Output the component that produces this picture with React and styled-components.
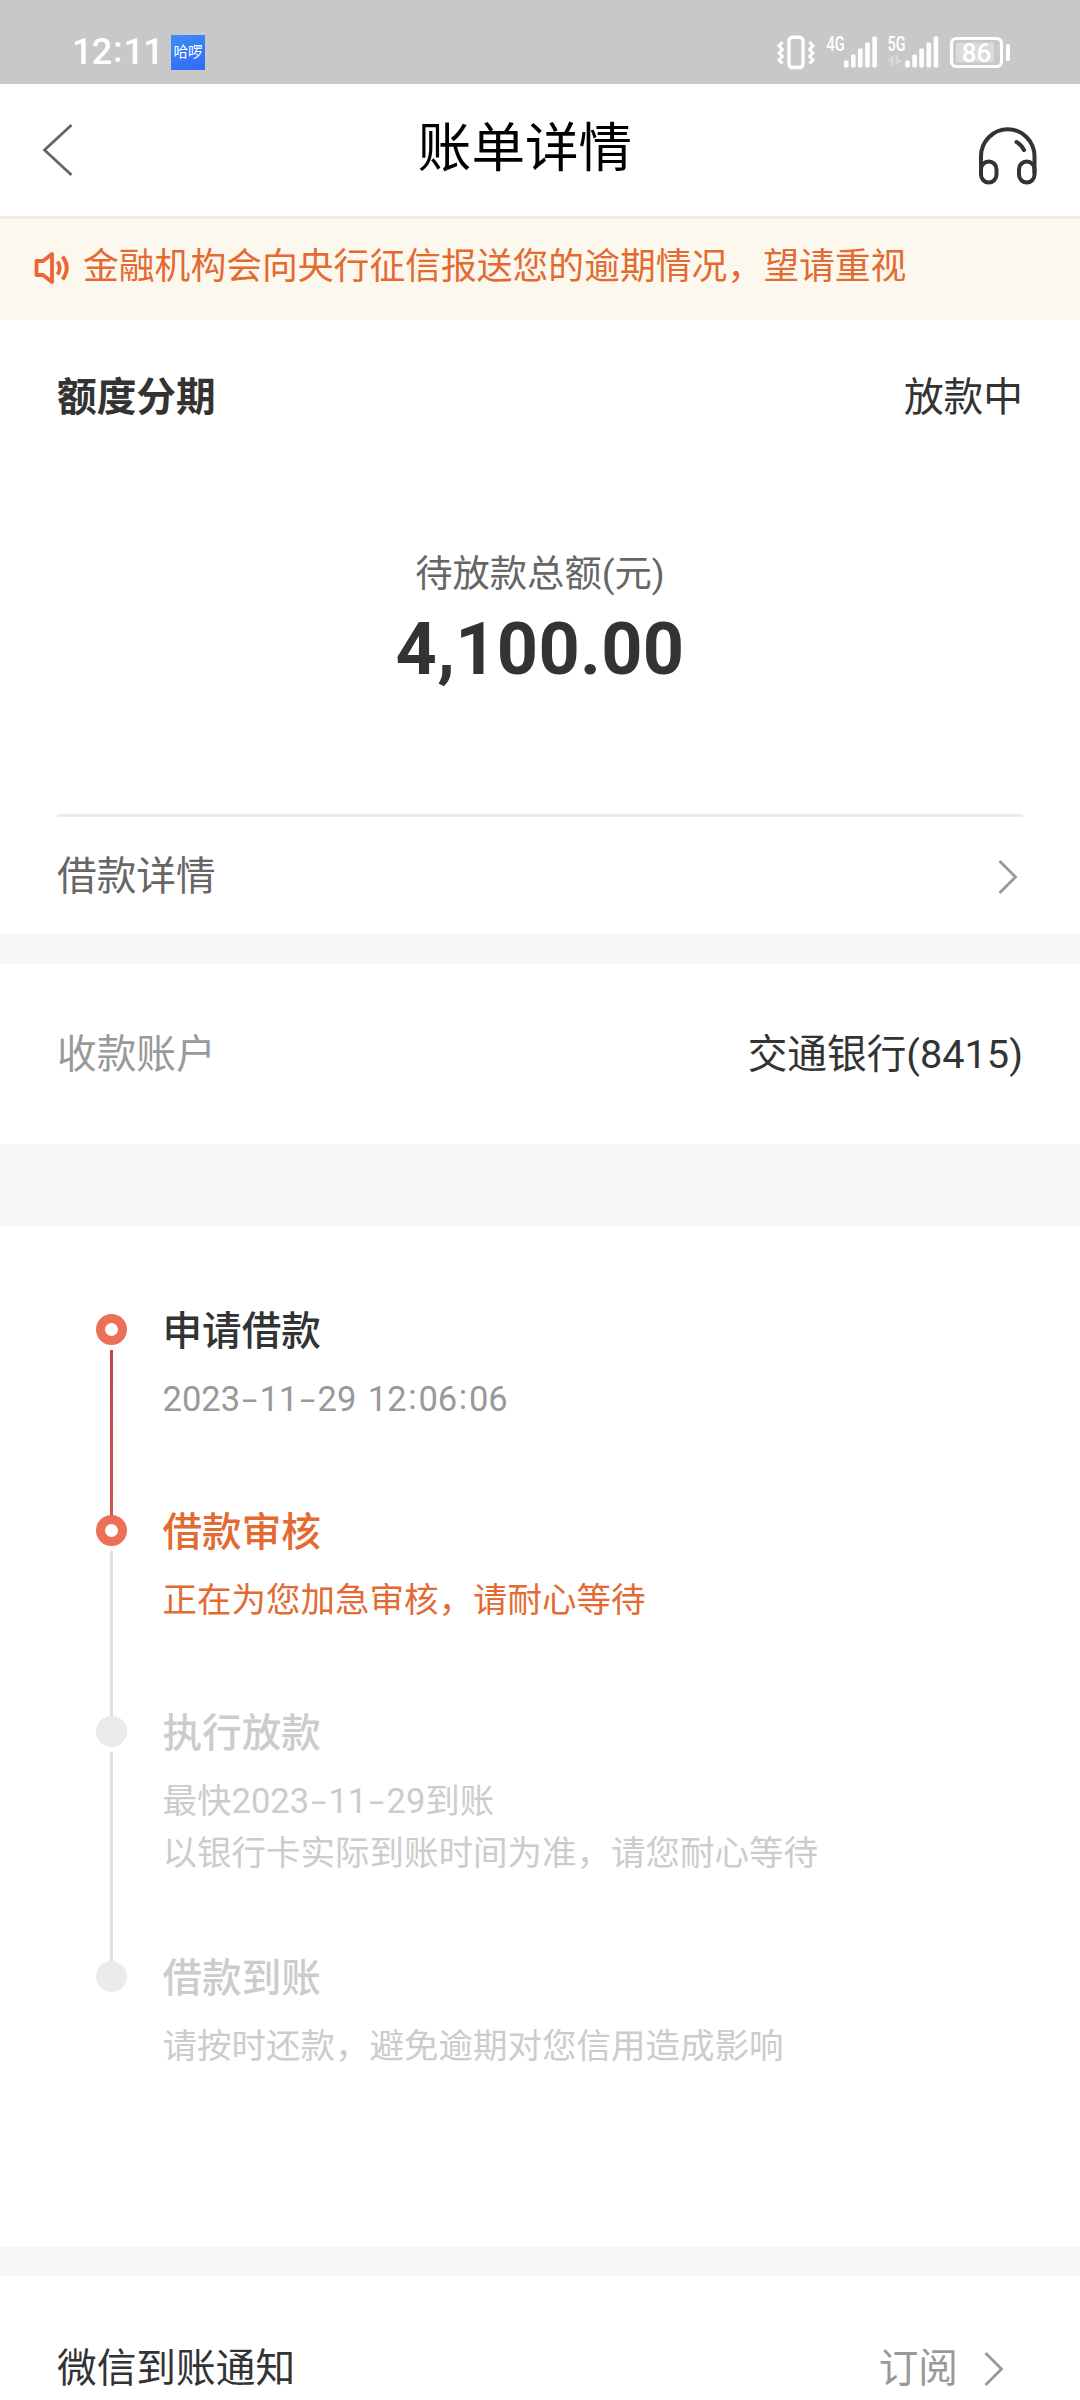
import React from 'react';
import styled, { createGlobalStyle } from 'styled-components';

const GlobalStyle = createGlobalStyle`
  * {
    box-sizing: border-box;
  }

  body {
    margin: 0;
    background: #ffffff;
    font-family: Roboto, 'Noto Sans CJK SC', sans-serif;
    color: #333333;
  }
`;

const Page = styled.div`
  display: flex;
  flex-direction: column;
  width: 1080px;
  height: 2400px;
  overflow: hidden;
  background: #ffffff;
`;

/* ---------- status bar ---------- */

const StatusBar = styled.div`
  flex: none;
  display: flex;
  align-items: flex-start;
  justify-content: space-between;
  height: 84px;
  padding: 27px 69px 0 72px;
  background: #c8c8c8;
  color: #ffffff;
`;

const StatusLeft = styled.div`
  display: flex;
  align-items: center;
  height: 34px;
  margin-top: 8px;
`;

const Clock = styled.span`
  width: 99px;
  font-size: 36px;
  font-weight: 500;
  line-height: 36px;
  letter-spacing: -0.8px;
  white-space: nowrap;
`;

const AppBadge = styled.span`
  width: 34px;
  height: 35px;
  background: linear-gradient(160deg, #3f8df7, #2f6af5);
  font-size: 14.5px;
  line-height: 35px;
  text-align: center;
  white-space: nowrap;
`;

/* ---------- header ---------- */

const Header = styled.header`
  flex: none;
  display: grid;
  grid-template-columns: 120px 1fr 120px;
  height: 135px;
  border-bottom: 3px solid #eeebe8;
`;

const BackButton = styled.div`
  padding: 39px 0 0 42px;
`;

const ServiceButton = styled.div`
  padding: 42px 0 0 18px;
`;

const Title = styled.h1`
  margin: 0;
  padding: 30px 30px 0 0;
  font-size: 53.6px;
  font-weight: 400;
  line-height: 70px;
  text-align: center;
  color: #000000;
`;

const Notice = styled.div`
  flex: none;
  display: flex;
  height: 101px;
  padding: 18px 0 0 33px;
  background: #fdf8ed;
  color: #e36a31;
  font-size: 35.8px;
  line-height: 61px;
  white-space: nowrap;

  svg {
    margin: 13px 12px 0 0;
  }
`;

/* ---------- sections ---------- */

const Row = styled.div`
  flex: none;
  display: flex;
  align-items: center;
  justify-content: space-between;
  height: ${p => p.$height}px;
  padding: 2px 57px 0;
  font-size: 39.7px;
  line-height: 50px;
`;

const Label = styled.span`
  color: ${p => p.$color || '#333333'};
  font-weight: ${p => (p.$bold ? 700 : 400)};
`;

const Summary = styled.div`
  flex: none;
  display: flex;
  flex-direction: column;
  align-items: center;
  height: 343px;
  margin: 0 57px;
  padding-top: 75px;
  border-bottom: 3px solid #ebebeb;
`;

const SummaryLabel = styled.div`
  font-size: 37.3px;
  line-height: 50px;
  color: #666666;
`;

const Amount = styled.div`
  margin-top: 9px;
  font-size: 72px;
  font-weight: 700;
  line-height: 84px;
  letter-spacing: 0.3px;
`;

const Gap = styled.div`
  flex: none;
  height: ${p => p.$height}px;
  background: #f6f6f8;
`;

const ArrowBox = styled.span`
  display: flex;
  padding-right: 4px;
`;

const Subscribe = styled.div`
  display: flex;
  align-items: center;
  gap: 26px;
  padding-right: 18px;
  color: #999999;
`;

const NotifyRow = styled(Row)`
  align-items: flex-start;
  padding-top: 68px;
`;

/* ---------- timeline ---------- */

const Timeline = styled.div`
  flex: none;
  height: 1021px;
  padding: 80px 0 0 96px;
`;

const Step = styled.div`
  display: flex;
  gap: 35.5px;
  min-height: 201px;
`;

const Rail = styled.div`
  display: flex;
  flex-direction: column;
  align-items: center;
  width: 31px;
  padding-top: 8px;
`;

const Dot = styled.div`
  flex: none;
  width: 31px;
  height: 31px;
  border-radius: 50%;
  background: ${p => (p.$active ? '#ffffff' : '#ebebeb')};
  border: ${p => (p.$active ? '9px solid #ed6f57' : 'none')};
`;

const Line = styled.div`
  flex: 1;
  width: 3px;
  margin: 5px 0 -9px;
  background: ${p => (p.$active ? 'linear-gradient(#c9404f, #cf5650)' : '#e0e0e0')};
`;

const StepBody = styled.div`
  padding: 1px 0 74px;
`;

const StepTitle = styled.div`
  font-size: 39.6px;
  font-weight: 500;
  line-height: 50px;
  color: ${p => p.$color};
`;

const StepText = styled.div`
  margin-top: 17px;
  font-size: 34.5px;
  line-height: 51.7px;
  word-spacing: 3px;
  white-space: nowrap;
  color: ${p => p.$color};
`;

// dashes and colons are set wider than the font's own
const Mark = styled.span`
  display: inline-block;
  width: ${p => (p.$dash ? '0.561em' : '0.34em')};
  text-align: center;
  transform: ${p => (p.$dash ? 'scaleX(1.6)' : 'translateY(-2px)')};
`;

const steps = [
  {
    title: '申请借款',
    lines: ['2023-11-29 12:06:06'],
    titleColor: '#333333',
    color: '#999999',
    dot: true,
    line: true,
  },
  {
    title: '借款审核',
    lines: ['正在为您加急审核，请耐心等待'],
    titleColor: '#e36a31',
    color: '#e36a31',
    dot: true,
  },
  {
    title: '执行放款',
    lines: ['最快2023-11-29到账', '以银行卡实际到账时间为准，请您耐心等待'],
    titleColor: '#cccccc',
    color: '#cccccc',
  },
  {
    title: '借款到账',
    lines: ['请按时还款，避免逾期对您信用造成影响'],
    titleColor: '#cccccc',
    color: '#cccccc',
  },
];

const withMarks = text =>
  text.split(/([-:])/).map((part, i) =>
    part === '-' || part === ':' ? (
      <Mark key={i} $dash={part === '-'}>{part}</Mark>
    ) : (
      part
    )
  );

/* ---------- icons ---------- */

const bars = [
  { x: 0, y: 24 },
  { x: 7, y: 18 },
  { x: 14, y: 12 },
  { x: 21.2, y: 6 },
  { x: 28.3, y: 0 },
];

const Signal = ({ x }) => (
  <g transform={`translate(${x} 1.5)`}>
    {bars.map(b => (
      <rect key={b.x} x={b.x} y={b.y} width="4.6" height={31 - b.y} rx="1.4" />
    ))}
  </g>
);

// origin of the drawing sits at the left edge of the vibrate icon
const StatusIcons = () => (
  <svg width="235" height="48" viewBox="0 -8 235 48" fill="#ffffff" fontFamily="Roboto">
    <g fill="none" stroke="#ffffff" strokeWidth="3">
      <rect x="13" y="2.3" width="14" height="30.2" rx="3.5" strokeWidth="3.4" />
      <path d="M6.5 7 L3 10.8 L6.5 14.4 L3 18 L6.5 21.4 L3 25 L6.5 28.5" strokeWidth="2.8" />
      <path d="M33.5 7 L37 10.8 L33.5 14.4 L37 18 L33.5 21.4 L37 25 L33.5 28.5" strokeWidth="2.8" />
      <rect x="175.5" y="3.5" width="50" height="28" rx="5" strokeWidth="3.2" />
    </g>
    <text x="50.5" y="16.3" fontSize="19.5" fontWeight="500" textLength="18" lengthAdjust="spacingAndGlyphs">4G</text>
    <Signal x={68} />
    <text x="111.5" y="16.3" fontSize="19.5" fontWeight="500" textLength="18" lengthAdjust="spacingAndGlyphs">5G</text>
    <g opacity="0.3">
      <path d="M111.5 26 L117.5 20 L117.5 31 L114.5 31 L114.5 26 Z" />
      <path d="M119.5 20 L122 20 L122 25 L126.5 25 L119.5 31 Z" />
    </g>
    <Signal x={129.3} />
    <rect x="180" y="7.5" width="38" height="20" rx="2" opacity="0.35" />
    <text x="200.5" y="26.8" fontSize="26" fontWeight="500" textAnchor="middle">86</text>
    <rect x="230" y="9" width="4" height="17" rx="1.6" />
  </svg>
);

const BackIcon = () => (
  <svg width="32" height="54" viewBox="0 0 32 54" fill="none" stroke="#666666" strokeWidth="2.8">
    <path d="M29.5 2 L2.5 27 L29.5 52" />
  </svg>
);

const HeadsetIcon = () => (
  <svg width="60" height="60" viewBox="0 0 60 60" fill="none" stroke="#333333" strokeWidth="4" strokeLinecap="round">
    <path d="M3 46 V30.5 A26.5 27 0 0 1 56.5 30.5 V46" />
    <rect x="3" y="35.5" width="15.5" height="21" rx="7.7" />
    <rect x="41" y="35.5" width="15.5" height="21" rx="7.7" />
    <path d="M38.5 16 Q43.5 19 46 24" />
  </svg>
);

const SpeakerIcon = () => (
  <svg width="38" height="36" viewBox="0 0 38 36" fill="none" stroke="#ec6532" strokeWidth="3.8">
    <path d="M3.5 11 H10 L19 4 V32 L10 25 H3.5 Z" strokeLinejoin="round" />
    <path d="M24.5 11.5 Q29 18 24.5 24.5" />
    <path d="M29.5 6.5 Q38 18 29.5 29.5" />
  </svg>
);

const ArrowIcon = () => (
  <svg width="21" height="34" viewBox="0 0 21 34" fill="none" stroke="#999999" strokeWidth="2.8">
    <path d="M1.5 1 L17.5 17 L1.5 33" />
  </svg>
);

const App = () => {
  return (
    <Page>
      <GlobalStyle />

      <StatusBar>
        <StatusLeft>
          <Clock>{withMarks('12:11')}</Clock>
          <AppBadge>哈啰</AppBadge>
        </StatusLeft>
        <StatusIcons />
      </StatusBar>

      <Header>
        <BackButton><BackIcon /></BackButton>
        <Title>账单详情</Title>
        <ServiceButton><HeadsetIcon /></ServiceButton>
      </Header>

      <Notice>
        <SpeakerIcon />
        金融机构会向央行征信报送您的逾期情况，望请重视
      </Notice>

      <Row $height={154}>
        <Label $bold>额度分期</Label>
        <Label>放款中</Label>
      </Row>
      <Summary>
        <SummaryLabel>待放款总额(元)</SummaryLabel>
        <Amount>4,100.00</Amount>
      </Summary>
      <Row $height={117}>
        <Label $color="#666666">借款详情</Label>
        <ArrowBox><ArrowIcon /></ArrowBox>
      </Row>

      <Gap $height={30} />
      <Row $height={180}>
        <Label $color="#999999">收款账户</Label>
        <Label>交通银行(8415)</Label>
      </Row>
      <Gap $height={82} />

      <Timeline>
        {steps.map((step, i) => (
          <Step key={step.title}>
            <Rail>
              <Dot $active={step.dot} />
              {i < steps.length - 1 && <Line $active={step.line} />}
            </Rail>
            <StepBody>
              <StepTitle $color={step.titleColor}>{step.title}</StepTitle>
              <StepText $color={step.color}>
                {step.lines.map(line => (
                  <div key={line}>{withMarks(line)}</div>
                ))}
              </StepText>
            </StepBody>
          </Step>
        ))}
      </Timeline>

      <Gap $height={29} />
      <NotifyRow $height={124}>
        <Label>微信到账通知</Label>
        <Subscribe>
          订阅
          <ArrowIcon />
        </Subscribe>
      </NotifyRow>
    </Page>
  );
};

export default App;
